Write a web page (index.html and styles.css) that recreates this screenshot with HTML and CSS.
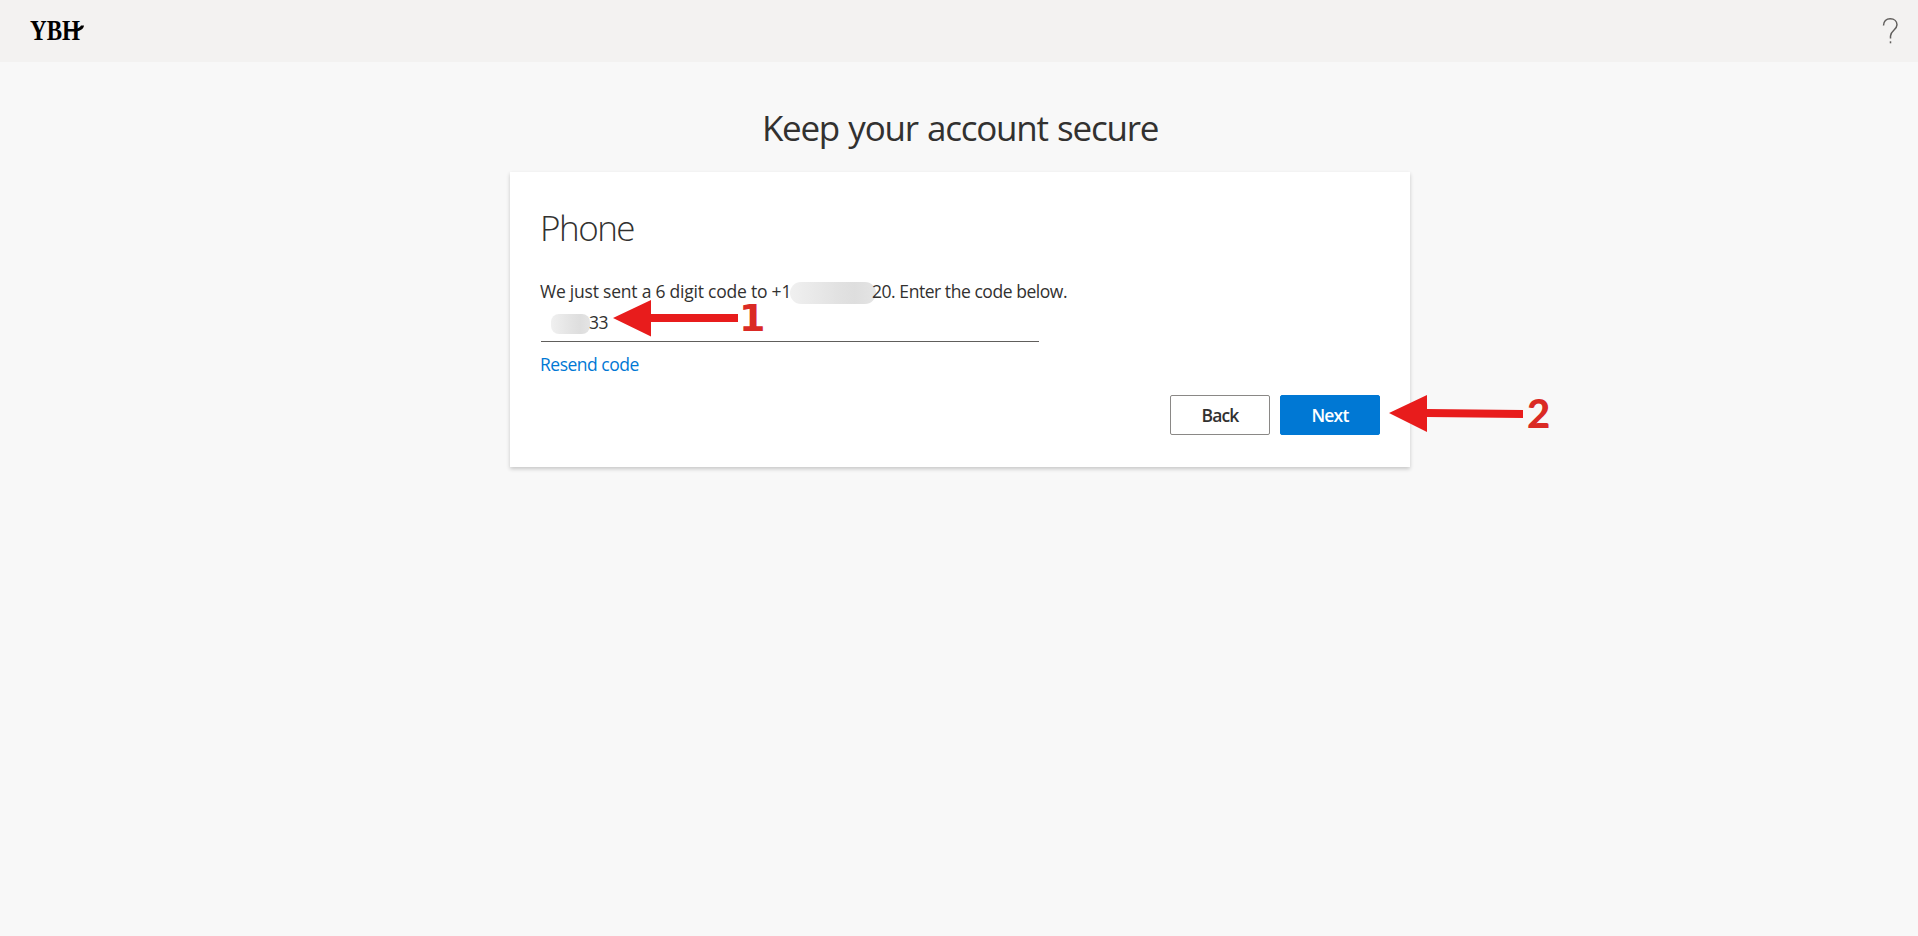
FILE: index.html
```
<!DOCTYPE html>
<html lang="en">
<head>
  <meta charset="UTF-8">
  <title>Keep your account secure</title>
  <link rel="stylesheet" href="styles.css">
</head>
<body>
<div class="header">
  <svg class="logo" width="56" height="30" viewBox="0 0 56 30">
    <text x="0" y="26.5" textLength="50" lengthAdjust="spacingAndGlyphs">YBH</text>
    <path d="M37 17C43 17 49 16 51 12.5H54C53.5 16.5 49 18.5 44 18.5H37Z"/>
  </svg>
  <svg class="help" width="18" height="28" viewBox="0 0 18 28">
    <path d="M1.5 8.5C1.5 4 4.3 1.8 8.2 1.8C12.3 1.8 15 4.2 15 7.8C15 13 8.5 13.5 8.5 19V21.5"/>
    <path d="M8.5 24.3V26.3"/>
  </svg>
</div>

<div class="main">
  <h1>Keep your account secure</h1>
  <div class="card">
    <h2>Phone</h2>
    <p class="tip"><span class="sent">We just sent a 6 digit code to +1</span><span class="mask"></span><span class="enter">20. Enter the code below.</span></p>
    <div class="code"><span class="mask small"></span><span>33</span></div>
    <a class="resend">Resend code</a>
    <div class="btns">
      <button class="btn">Back</button>
      <button class="btn next">Next</button>
    </div>
  </div>
</div>

<!-- step arrows, drawn over the card -->
<svg class="arrow arrow1" width="126" height="38" viewBox="0 0 126 38">
  <path d="M0 18L38 0V14H125V22H38V36.5Z"/>
</svg>
<span class="num num1">1</span>
<svg class="arrow arrow2" width="136" height="38" viewBox="0 0 136 38">
  <path d="M0 18L38 0V14L134 15V23L38 22V37Z"/>
</svg>
<span class="num num2">2</span>
</body>
</html>
```

FILE: styles.css
```
* {
  padding: 0;
  margin: 0;
  box-sizing: border-box;
}

body {
  min-height: 936px;
  position: relative;
  overflow: hidden;
  background: #f8f8f8;
  font-family: "Open Sans", "Noto Sans", sans-serif;
  font-size: 17.5px;
  letter-spacing: -0.4px;
  color: #323130;
}

.header {
  display: flex;
  justify-content: space-between;
  height: 62px;
  padding: 17px 18px 0 30px;
  background: #f3f2f1;
}

.logo {
  margin-top: -4px;
  overflow: visible;
}

.logo text {
  font-family: "Liberation Serif", serif;
  font-size: 30px;
  font-weight: bold;
  letter-spacing: 0;
}

.help path {
  fill: none;
  stroke: #605e5c;
  stroke-width: 1.5;
}

.main {
  width: 900px;
  margin: 0 auto;
  position: relative;
  left: 1px;
}

h1 {
  height: 110px;
  padding-top: 41px;
  line-height: 49px;
  text-align: center;
  font-size: 35px;
  font-weight: 400;
  letter-spacing: -1.25px;
  word-spacing: 1.5px;
  white-space: nowrap;
}

.card {
  height: 295px;
  padding: 30px;
  background: #fff;
  box-shadow: 0 2px 4px rgba(0, 0, 0, 0.2);
}

h2 {
  height: 76px;
  line-height: 51px;
  font-size: 35px;
  font-weight: 300;
  letter-spacing: -1.5px;
}

.tip {
  display: flex;
  height: 28px;
  line-height: 27px;
  white-space: nowrap;
}

.sent {
  width: 250px;
  letter-spacing: -0.22px;
}

.enter {
  margin-left: -4px;
  letter-spacing: -0.45px;
}

.mask {
  width: 86px;
  height: 22px;
  margin-top: 4px;
  border-radius: 11px;
  background: linear-gradient(90deg, #f0f0f0, #e2e2e2 55%, #dedede 75%, #e4e4e4);
}

.code {
  display: flex;
  width: 498px;
  height: 36px;
  margin-left: 1px;
  padding-left: 10px;
  border-bottom: 1px solid #605e5c;
  line-height: 33px;
}

.mask.small {
  width: 39px;
  height: 20px;
  margin-top: 8px;
  margin-right: -1px;
  border-radius: 8px;
}

.resend {
  display: block;
  height: 53px;
  line-height: 45px;
  letter-spacing: -0.5px;
  color: #0078d4;
}

.btns {
  display: flex;
  justify-content: flex-end;
  gap: 10px;
}

.btn {
  width: 100px;
  height: 40px;
  border: 1px solid #8a8886;
  border-radius: 2px;
  background: #fff;
  font: 600 17.5px "Open Sans", sans-serif;
  letter-spacing: -0.8px;
  color: #323130;
}

.btn.next {
  border-color: #0078d4;
  background: #0078d4;
  color: #fff;
}

.arrow {
  position: absolute;
  fill: #e81c1c;
}

.arrow1 {
  left: 613px;
  top: 300px;
}

.arrow2 {
  left: 1389px;
  top: 395px;
}

.num {
  position: absolute;
  line-height: 40px;
  font-size: 39px;
  font-weight: bold;
  letter-spacing: 0;
  color: #da2a25;
}

.num1 {
  left: 739px;
  top: 298px;
  font-size: 38px;
  font-family: "DejaVu Sans", sans-serif;
}

.num2 {
  left: 1527px;
  top: 393px;
  font-size: 40px;
  font-weight: 900;
  font-family: Lato, sans-serif;
}
```
